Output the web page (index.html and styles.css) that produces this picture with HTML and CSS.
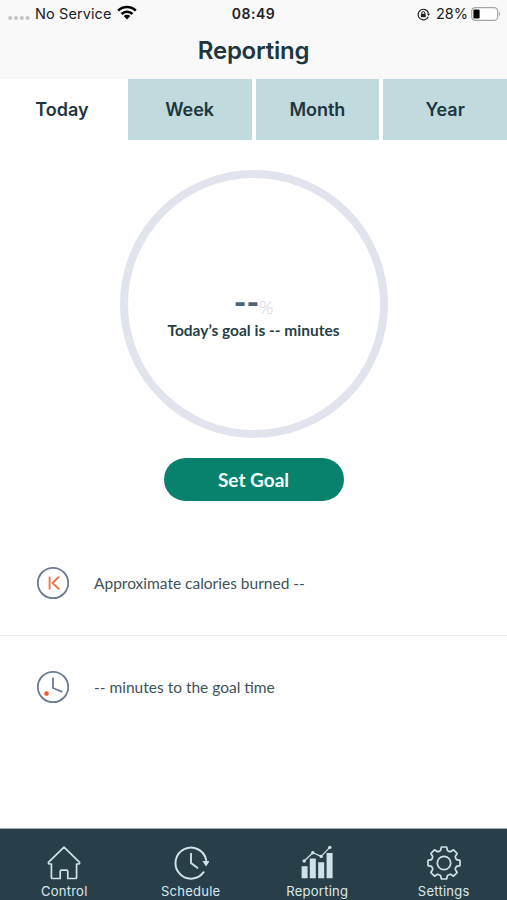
FILE: index.html
```html
<!DOCTYPE html>
<html lang="en">
<head>
<meta charset="utf-8">
<title>Reporting</title>
<link rel="stylesheet" href="styles.css">
</head>
<body>
<div class="app">
  <header class="header">
    <div class="status">
      <div class="status-left">
        <svg width="22" height="6" viewBox="0 0 22 6" fill="#c3c3c3"><circle cx="2.2" cy="3" r="2"/><circle cx="8" cy="3" r="2"/><circle cx="13.8" cy="3" r="2"/><circle cx="19.6" cy="3" r="2"/></svg>
        <span class="carrier">No Service</span>
        <svg class="wifi" width="20" height="15" viewBox="0 0 20 15"><g fill="none" stroke="#050505" stroke-width="2.6"><path d="M1.2 5.6a12.5 12.5 0 0 1 17.6 0"/><path d="M4.5 9a7.8 7.8 0 0 1 11 0"/></g><path d="M10 14.5l-3.3-3.4a4.7 4.7 0 0 1 6.6 0z" fill="#050505"/></svg>
      </div>
      <time class="clock">08:49</time>
      <div class="status-right">
        <svg width="13" height="13" viewBox="0 0 13 13"><path d="M11.3 8.7A5.3 5.3 0 1 1 11.5 5" fill="none" stroke="#222" stroke-width="1.2"/><path d="M9.8 5.4h3.2L11.6 8z" fill="#222"/><path d="M4.8 6V5a1.5 1.5 0 0 1 3 0v1" fill="none" stroke="#222"/><path d="M3.9 5.8h4.8v3.4H3.9z" fill="#222"/></svg>
        <span class="percent">28%</span>
        <svg width="30" height="14" viewBox="0 0 30 14"><rect x=".7" y=".7" width="26" height="12.6" rx="3.6" fill="#fff" stroke="#a5a5a5" stroke-width="1.2"/><rect x="2.4" y="2.5" width="6.2" height="9" rx="1.2" fill="#050505"/><path d="M28 4.7q2 2.3 0 4.6z" fill="#a5a5a5"/></svg>
      </div>
    </div>
    <h1 class="title">Reporting</h1>
  </header>
  <nav class="tabs">
    <div class="tab active">Today</div><div class="tab">Week</div><div class="tab">Month</div><div class="tab">Year</div>
  </nav>
  <main class="content">
    <div class="ring">
      <div class="score"><span class="value">--</span><span class="unit">%</span></div>
      <div class="goal">Today’s goal is -- minutes</div>
    </div>
    <button class="set-goal">Set Goal</button>
    <div class="rows">
      <div class="row">
        <svg width="34" height="34" viewBox="0 0 34 34" fill="none"><circle cx="17" cy="17" r="15.2" stroke="#6b7b90" stroke-width="1.8"/><path d="M13.6 10.4v13M23 10.7L16.4 17l6.8 6.3" stroke="#ed7750" stroke-width="1.9"/></svg>
        <span>Approximate calories burned --</span>
      </div>
      <div class="row second">
        <svg width="34" height="34" viewBox="0 0 34 34" fill="none"><circle cx="17" cy="17" r="15.2" stroke="#6b7b90" stroke-width="1.8"/><path d="M17 7.6V18l9.2 3.8" stroke="#6b7b90" stroke-width="1.8"/><circle cx="10.5" cy="23.6" r="2.3" fill="#f15a2c"/></svg>
        <span>-- minutes to the goal time</span>
      </div>
    </div>
  </main>
  <nav class="bottom">
    <div class="item">
      <svg width="36" height="36" viewBox="-18 -18 36 36"><path d="M0-15.8L-15.6-.6Q-15.8 1-14 1H-12.6V14.5Q-12.6 15.5-11.6 15.5H-3.8V8.5Q-3.8 7.2-2.5 7.2H2.5Q3.8 7.2 3.8 8.5V15.5H11.6Q12.6 15.5 12.6 14.5V1H14Q15.8 1 15.6-.6Z"/></svg>
      <span class="control">Control</span>
    </div>
    <div class="item">
      <svg width="36" height="36" viewBox="-18 -18 36 36"><path d="M12.6 9.2A15.5 15.5 0 1 1 15.2-3" stroke-width="2"/><path d="M0-9.3V0L6.3 4.8" stroke-width="1.9"/><path class="solid" d="M11.4-2H18.6L15 3.5Z"/></svg>
      <span class="schedule">Schedule</span>
    </div>
    <div class="item">
      <svg width="36" height="36" viewBox="-18 -18 36 36"><path class="solid" d="M-15.4 3.2h6v12h-6zM-7.2-4.6h6v19.8h-6zM1.2-.8h6v16h-6zM9.6-10h6v25.2h-6z"/><path d="M-12.8-2L-4.2-10.3 4.2-6.6 12.8-15.6" stroke-width="1.2"/><g class="solid"><circle cx="-12.8" cy="-2" r="1.7"/><circle cx="-4.2" cy="-10.3" r="1.7"/><circle cx="4.2" cy="-6.6" r="1.7"/><circle cx="12.8" cy="-15.6" r="1.7"/></g></svg>
      <span class="reporting">Reporting</span>
    </div>
    <div class="item">
      <svg width="36" height="36" viewBox="-18 -18 36 36"><path d="M-2.6-16H2.6L3.4-12.6Q4.9-11.2 6.5-11.3L9.5-13.2 13.2-9.5 11.3-6.5Q11.2-4.9 12.6-3.4L16-2.6V2.6L12.6 3.4Q11.2 4.9 11.3 6.5L13.2 9.5 9.5 13.2 6.5 11.3Q4.9 11.2 3.4 12.6L2.6 16H-2.6L-3.4 12.6Q-4.9 11.2-6.5 11.3L-9.5 13.2-13.2 9.5-11.3 6.5Q-11.2 4.9-12.6 3.4L-16 2.6V-2.6L-12.6-3.4Q-11.2-4.9-11.3-6.5L-13.2-9.5-9.5-13.2-6.5-11.3Q-4.9-11.2-3.4-12.6Z"/><circle r="6.7"/></svg>
      <span class="settings">Settings</span>
    </div>
  </nav>
</div>
</body>
</html>
```
FILE: styles.css
```css
* { box-sizing: border-box; }
body { margin: 0; background: #fff; font-family: Inter, sans-serif; color: #1d3640; }
svg { display: block; flex: none; }
.app { width: 507px; height: 900px; display: flex; flex-direction: column; overflow: hidden; }
.header { height: 79px; flex: none; background: #f9f9f9; }
.status { height: 28px; display: grid; grid-template-columns: 1fr auto 1fr; align-items: center; color: #202020; font-size: 14.5px; line-height: 18px; }
.status-left { display: flex; align-items: center; padding-left: 8px; }
.status-left svg:first-child { margin-top: 7px; }
.carrier { margin-left: 5px; letter-spacing: .1px; }
.wifi { margin: -3px 0 0 5px; }
.clock { font-weight: 600; font-size: 14px; letter-spacing: .5px; }
.status-right { display: flex; align-items: center; justify-content: flex-end; padding-right: 6px; }
.percent { margin: 0 3px 0 6px; }
.title { margin: 8px 0 0; text-align: center; font-size: 24px; font-weight: 600; line-height: 30px; letter-spacing: -.25px; }
.tabs { height: 61px; flex: none; display: grid; grid-template-columns: repeat(4, 1fr); gap: 4px; }
.tab { display: flex; align-items: center; justify-content: center; background: #c1dade; font-size: 18px; font-weight: 600; }
.tab.active { background: #fff; }
.content { flex: 1; display: flex; flex-direction: column; align-items: center; padding-top: 30px; }
.ring { width: 268px; height: 268px; flex: none; border: 8px solid #e1e3ed; border-radius: 50%; display: flex; flex-direction: column; align-items: center; padding-top: 107px; }
.score { height: 32px; display: flex; align-items: baseline; line-height: 32px; font-family: Lato, sans-serif; }
.value { font-size: 34px; font-weight: 900; color: #51657a; }
.unit { font-size: 18px; font-weight: 300; color: #c9cce0; }
.goal { font: 700 15.5px/20px Lato, sans-serif; color: #263f46; margin-top: 3px; white-space: nowrap; }
.set-goal { width: 180px; height: 43px; flex: none; margin-top: 20px; padding: 0; border: 0; border-radius: 22px; background: #09826d; color: #f4fffc; font: 700 19px/24px Lato, sans-serif; }
.rows { align-self: stretch; margin-top: 29px; }
.row { height: 106px; display: flex; align-items: center; padding-left: 36px; gap: 24px; border-bottom: 1px solid #eee; font: 400 15.5px/20px Lato, sans-serif; color: #415259; }
.row.second { height: 102px; border-bottom: 0; }
.bottom { height: 72px; flex: none; display: grid; grid-template-columns: repeat(4, 126.5px); background: #283f4a; border-top: 1px solid #a0adb3; color: #dce9ee; }
.item { display: flex; flex-direction: column; align-items: center; padding-top: 16px; }
.item svg { fill: none; stroke: #cfe2e9; stroke-width: 1.7; stroke-linejoin: round; stroke-linecap: round; }
.item .solid { fill: #cfe2e9; stroke: none; }
.item span { margin-top: 2px; font-size: 13px; line-height: 16px; letter-spacing: .25px; }
.item { padding-left: 2px; }
```
